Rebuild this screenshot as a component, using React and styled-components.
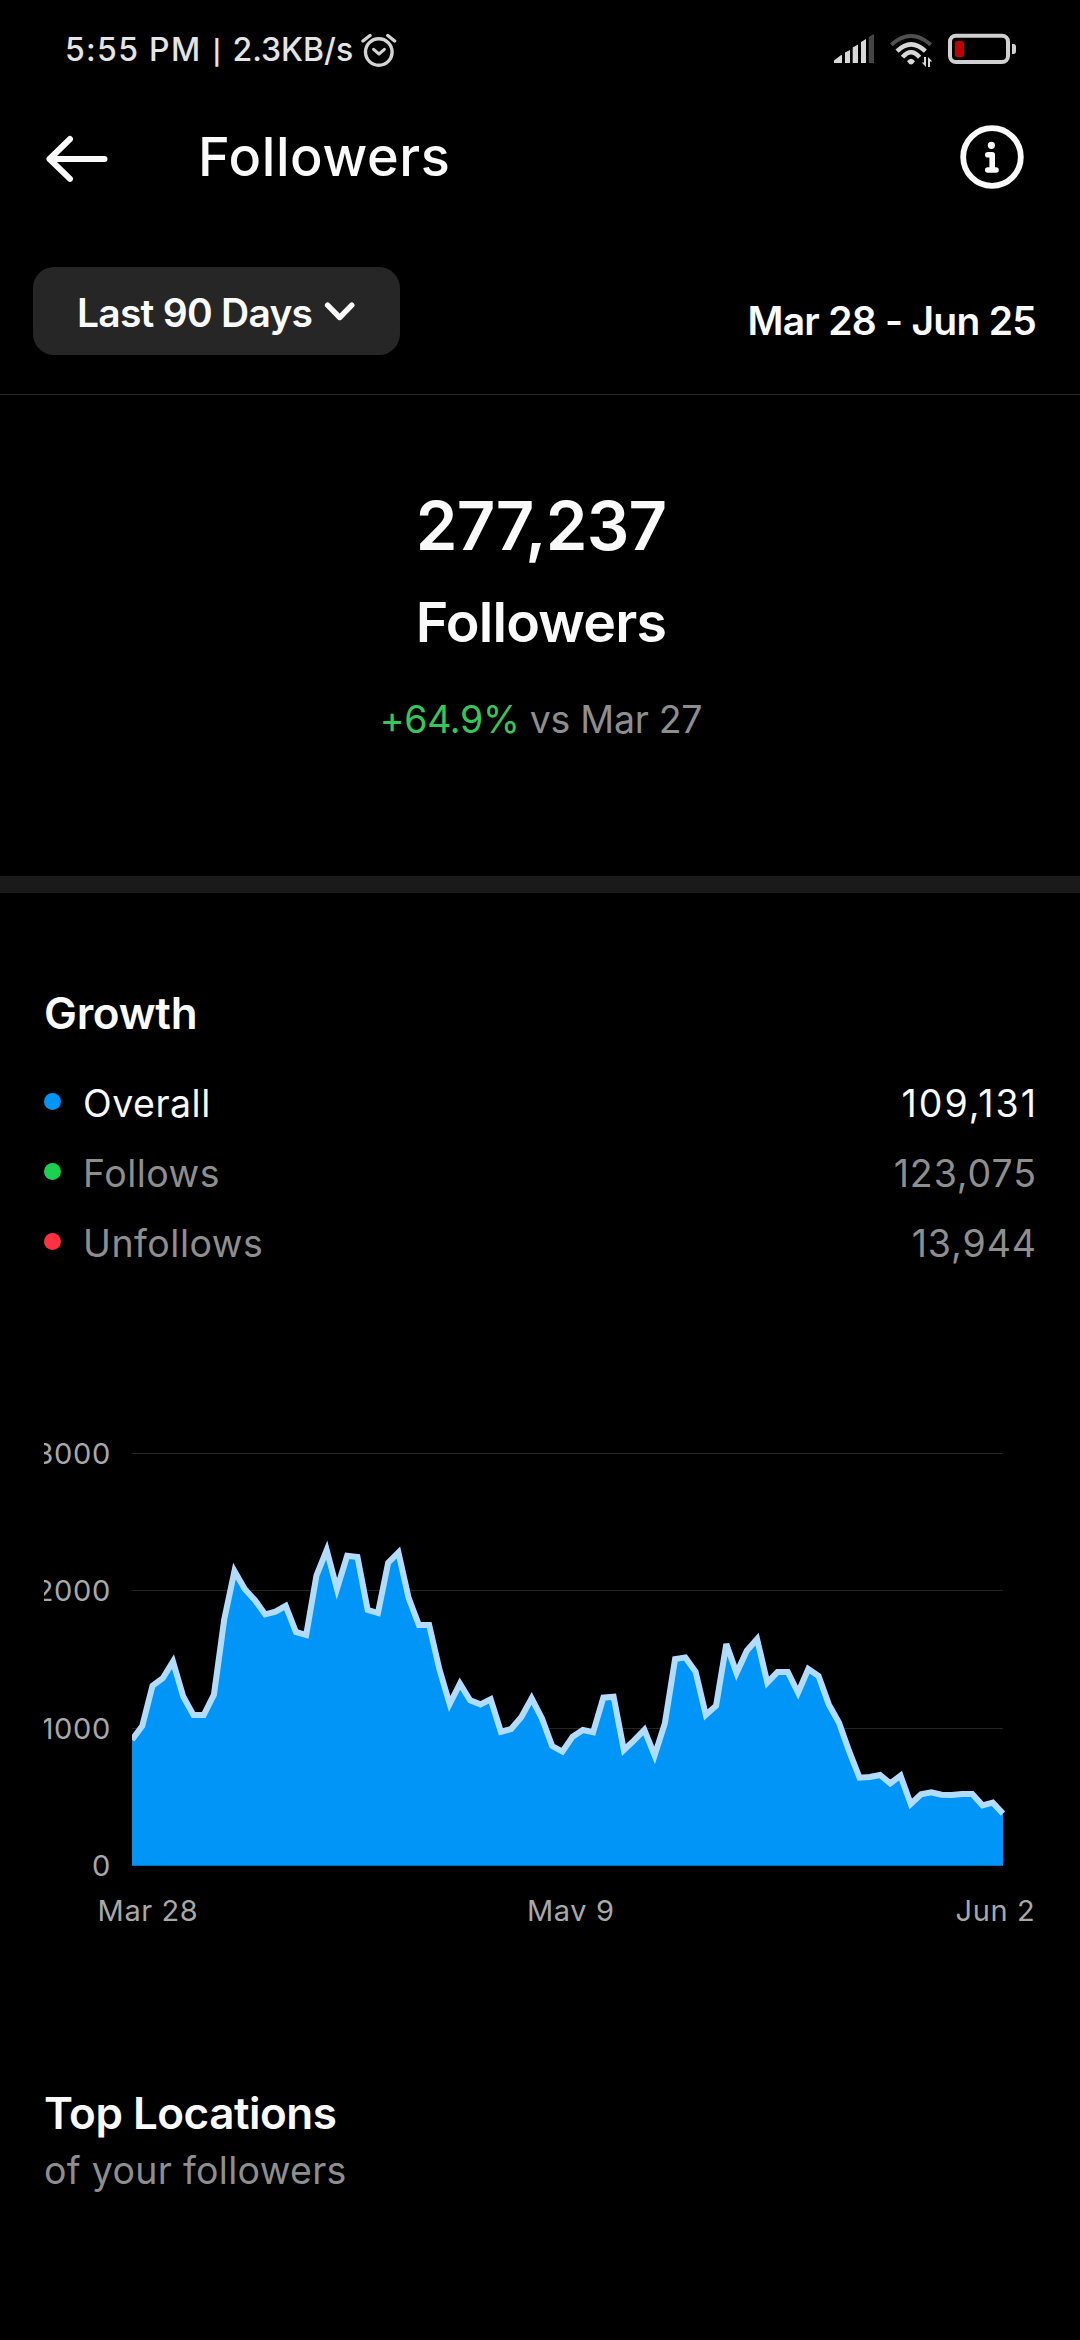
import React from "react";
import styled, { createGlobalStyle } from "styled-components";

const GlobalStyle = createGlobalStyle`
  * { box-sizing: border-box; }
  html, body { margin: 0; background: #000; }
  body { font-family: Inter, Roboto, "Liberation Sans", sans-serif; color: #fafafa; }
`;

const Screen = styled.main`
  width: 1080px;
  height: 2340px;
  background: #000;
  overflow: hidden;
  display: flex;
  flex-direction: column;
`;

const Text = styled.span`
  font-size: ${(p) => p.$size}px;
  line-height: ${(p) => p.$line}px;
  font-weight: ${(p) => p.$weight || 400};
  letter-spacing: ${(p) => p.$track || 0}px;
  color: ${(p) => p.$color || "#fafafa"};
  white-space: pre;
`;

const StatusBar = styled.div`
  height: 102px;
  flex: none;
  display: flex;
  justify-content: space-between;
  align-items: center;
  padding: 0 64px 0 65px;
`;

const StatusGroup = styled.div`
  display: flex;
  align-items: center;
  gap: ${(p) => p.$gap}px;
`;

const StatusLine = styled.div`
  display: flex;
  align-items: baseline;
`;

const StatusText = styled.span`
  font-size: 32px;
  line-height: 40px;
  font-weight: 500;
  letter-spacing: ${(p) => p.$track}px;
  color: #e4e4e4;
  white-space: pre;
`;

const StatusSeparator = styled.span`
  width: 31px;
  text-align: center;
  font-size: 24px;
  line-height: 40px;
  font-weight: 600;
  color: #e4e4e4;
`;

const Header = styled.header`
  height: 112px;
  flex: none;
  display: flex;
  align-items: center;
  padding: 0 56px 0 46px;
`;

const HeaderTitle = styled.h1`
  margin: 0 auto 0 88px;
  padding-bottom: 3px;
  font-size: 54px;
  line-height: 64px;
  font-weight: 500;
  letter-spacing: 0.6px;
  color: #fafafa;
`;

const IconButton = styled.button`
  display: flex;
  padding: 0;
  border: 0;
  background: none;
`;

const FilterBar = styled.section`
  height: 181px;
  flex: none;
  display: flex;
  justify-content: space-between;
  align-items: flex-start;
  padding: 53px 44px 0 33px;
  border-bottom: 1px solid #262626;
`;

const RangeButton = styled.button`
  width: 367px;
  height: 88px;
  display: flex;
  align-items: center;
  gap: 12px;
  padding: 4px 0 0 44px;
  border: 0;
  border-radius: 21px;
  background: #262626;
  font-family: inherit;

  svg {
    margin-bottom: 2px;
  }
`;

const DateRange = styled.div`
  padding-top: 24px;
  display: flex;
`;

const Summary = styled.section`
  height: 481px;
  flex: none;
  display: flex;
  flex-direction: column;
  align-items: center;
  padding: 90px 0 0 2px;
`;

const Divider = styled.div`
  height: 17px;
  flex: none;
  background: #1a1a1a;
`;

const Growth = styled.section`
  flex: none;
  height: 540px;
  padding: 90px 44px 0;
  display: flex;
  flex-direction: column;
`;

const SectionTitle = styled.h2`
  margin: 0;
  font-size: 44px;
  line-height: 60px;
  font-weight: 600;
  letter-spacing: ${(p) => p.$track || 0}px;
  color: #fafafa;
`;

const Legend = styled.ul`
  list-style: none;
  margin: 26px 0 0;
  padding: 0;
`;

const LegendRow = styled.li`
  height: 70px;
  display: flex;
  align-items: center;
  color: ${(p) => (p.$active ? "#fafafa" : "#8e8e8e")};
`;

const Dot = styled.i`
  width: 17px;
  height: 17px;
  border-radius: 50%;
  margin: 0 22px 5px 0;
  background: ${(p) => p.$color};
`;

const LegendName = styled.span`
  flex: 1;
  font-size: 37.5px;
  line-height: 60px;
  letter-spacing: 0.5px;
`;

const LegendValue = styled.span`
  font-size: 37.5px;
  line-height: 60px;
  letter-spacing: ${(p) => p.$track}px;
  margin-right: ${(p) => -p.$track}px;
`;

const ChartFrame = styled.div`
  flex: none;
  height: 488px;
  margin: 0 44px;
  overflow: hidden;
`;

const Chart = styled.svg`
  display: block;
  font-family: Inter, Roboto, "Liberation Sans", sans-serif;
  font-size: 29px;
`;

const Locations = styled.section`
  padding: 162px 44px 0;
  display: flex;
  flex-direction: column;
`;

const DAILY = [
  916, 1017, 1310, 1364, 1485, 1231, 1096, 1096, 1246, 1792, 2144, 2014, 1932,
  1829, 1849, 1891, 1701, 1679, 2112, 2297, 2014, 2255, 2247, 1861, 1839, 2205,
  2279, 1948, 1752, 1752, 1429, 1177, 1325, 1204, 1174, 1211, 975, 995, 1082,
  1218, 1073, 871, 830, 939, 988, 971, 1223, 1230, 842, 912, 988, 803, 1036,
  1504, 1516, 1412, 1097, 1165, 1614, 1402, 1565, 1650, 1332, 1410, 1410, 1259,
  1432, 1381, 1174, 1041, 830, 641, 646, 660, 599, 655, 449, 519, 534, 517, 515,
  522, 522, 439, 459, 379,
];

const LEGEND = [
  { name: "Overall", value: "109,131", color: "#0095f6", active: true, track: 2 },
  { name: "Follows", value: "123,075", color: "#1cd14f", track: 0.9 },
  { name: "Unfollows", value: "13,944", color: "#ff3040", track: 0.9 },
];

const PLOT = { left: 88, right: 959, base: 432.7, unit: 0.1374 };

function GrowthChart() {
  const step = (PLOT.right - PLOT.left) / (DAILY.length - 1);
  const points = DAILY.map(
    (v, i) => `${(PLOT.left + i * step).toFixed(2)},${(PLOT.base - v * PLOT.unit).toFixed(2)}`
  ).join(" ");
  return (
    <Chart width="992" height="488" viewBox="0 0 992 488">
      <clipPath id="plot">
        <rect x={PLOT.left} y="0" width="880" height="440" />
      </clipPath>
      {[3000, 2000, 1000].map((v) => (
        <rect
          key={v}
          x={PLOT.left}
          y={Math.round(PLOT.base - v * PLOT.unit - 0.5)}
          width={PLOT.right - PLOT.left}
          height="1"
          fill="#262626"
        />
      ))}
      <g clipPath="url(#plot)">
        <polygon
          fill="#0095f6"
          points={`${PLOT.left},${PLOT.base} ${points} ${PLOT.right},${PLOT.base}`}
        />
        <polyline fill="none" stroke="#b2dcff" strokeWidth="6" points={points} />
      </g>
      <g fill="#a8a8a8" letterSpacing="0.6">
        {[3000, 2000, 1000, 0].map((v) => (
          <text key={v} x="66.8" y={PLOT.base - v * PLOT.unit + 10.5} textAnchor="end">
            {v}
          </text>
        ))}
      </g>
      <g fill="#a8a8a8" letterSpacing="0.6">
        <text x="53.6" y="487.5">Mar 28</text>
        <text x="483" y="487.5">May 9</text>
        <text x="911.6" y="487.5">Jun 2</text>
      </g>
    </Chart>
  );
}

const AlarmIcon = () => (
  <svg width="36" height="36" viewBox="360 33 36 36" fill="none" stroke="#d4d4d4" strokeLinecap="round" strokeLinejoin="round">
    <circle cx="377.8" cy="52" r="13.3" strokeWidth="3.4" />
    <path d="M362 41L369 35.5M386.8 35.5L393.6 41" strokeWidth="3.4" />
    <path d="M372.6 49.3L378 54L383.4 49.3" strokeWidth="3" />
  </svg>
);

const SignalIcon = () => (
  <svg width="40" height="34" viewBox="834 34 40 34" fill="#d8d8d8">
    <path d="M834 63V60.5L840.5 55.5L842 55V63ZM845 63V52.5L850 50V63ZM852.7 63V47.5L858 44.5V63ZM861 63V42L866 39V63Z" />
    <path d="M868.8 63V36.8L874 34V63Z" fill="#454545" />
  </svg>
);

const WifiIcon = () => (
  <svg width="44" height="36" viewBox="889 33 44 36" fill="none" strokeLinecap="butt">
    <path d="M891.3 44.8Q911 27.2 930.7 44.8" stroke="#505050" strokeWidth="4" />
    <path d="M897 51.2Q911 37.6 925.4 51.2" stroke="#d8d8d8" strokeWidth="4.4" />
    <path d="M902.5 57.2Q911 47.2 919.6 57.2" stroke="#d8d8d8" strokeWidth="4.4" />
    <path d="M907 61.3Q911 56.2 915 61.3Q911 67.6 907 61.3Z" fill="#d8d8d8" />
    <path d="M924 57H926V67L921.7 62.5H924ZM928 67V57L932.4 61.5H930V67Z" fill="#d8d8d8" />
  </svg>
);

const BatteryIcon = () => (
  <svg width="68" height="36" viewBox="948 33 68 36">
    <rect x="950" y="35.7" width="58" height="26.4" rx="6" fill="none" stroke="#d0d0d0" strokeWidth="4" />
    <rect x="954.8" y="41" width="9.2" height="16" rx="2.5" fill="#c00000" />
    <path d="M1012 44H1013.5Q1016 44 1016 47V51Q1016 54 1013.5 54H1012Z" fill="#d0d0d0" />
  </svg>
);

const BackIcon = () => (
  <svg width="64" height="50" viewBox="46 133 64 50" fill="none" stroke="#fafafa" strokeWidth="6" strokeLinecap="round" strokeLinejoin="round">
    <path d="M104.5 159H49.5M70 139L49.5 159L70 178.8" />
  </svg>
);

const InfoIcon = () => (
  <svg width="64" height="66" viewBox="960 125 64 66" fill="none" stroke="#fafafa">
    <circle cx="992" cy="157" r="28.8" strokeWidth="5.8" />
    <circle cx="991.4" cy="145.3" r="3.6" fill="#fafafa" stroke="none" />
    <path d="M987.8 154.8H992.2V170M987.8 170H996" strokeWidth="5.6" strokeLinecap="round" strokeLinejoin="round" />
  </svg>
);

const ChevronIcon = () => (
  <svg width="32" height="24" viewBox="324 300 32 24" fill="none" stroke="#fafafa" strokeWidth="5.4" strokeLinecap="round" strokeLinejoin="round">
    <path d="M327.6 305.2L339.7 317.5L351.8 305.2" />
  </svg>
);

export default function App() {
  return (
    <Screen>
      <GlobalStyle />
      <StatusBar>
        <StatusGroup $gap={8}>
          <StatusLine>
            <StatusText $track={1.3}>5:55 PM</StatusText>
            <StatusSeparator>|</StatusSeparator>
            <StatusText $track={0}>2.3KB/s</StatusText>
          </StatusLine>
          <AlarmIcon />
        </StatusGroup>
        <StatusGroup $gap={15}>
          <SignalIcon />
          <WifiIcon />
          <BatteryIcon />
        </StatusGroup>
      </StatusBar>
      <Header>
        <IconButton aria-label="Back"><BackIcon /></IconButton>
        <HeaderTitle>Followers</HeaderTitle>
        <IconButton aria-label="Info"><InfoIcon /></IconButton>
      </Header>
      <FilterBar>
        <RangeButton>
          <Text $size={39} $line={50} $weight={600} $track={-0.75}>Last 90 Days</Text>
          <ChevronIcon />
        </RangeButton>
        <DateRange>
          <Text $size={39} $line={60} $weight={600} $track={-0.75}>Mar 28 - Jun 25</Text>
        </DateRange>
      </FilterBar>
      <Summary>
        <Text $size={67} $line={82} $weight={600} $track={-0.8}>277,237</Text>
        <Text $size={55.5} $line={109} $weight={600} $track={-0.8}>Followers</Text>
        <Text $size={37.5} $line={87} $color="#8e8e8e" $track={-0.3}>
          <Text $size={37.5} $line={87} $color="#34c759" $track={-0.3}>+64.9%</Text> vs Mar 27
        </Text>
      </Summary>
      <Divider />
      <Growth>
        <SectionTitle $track={-0.3}>Growth</SectionTitle>
        <Legend>
          {LEGEND.map((row) => (
            <LegendRow key={row.name} $active={row.active}>
              <Dot $color={row.color} />
              <LegendName>{row.name}</LegendName>
              <LegendValue $track={row.track}>{row.value}</LegendValue>
            </LegendRow>
          ))}
        </Legend>
      </Growth>
      <ChartFrame>
        <GrowthChart />
      </ChartFrame>
      <Locations>
        <SectionTitle $track={-0.5}>Top Locations</SectionTitle>
        <Text $size={37.5} $line={56} $color="#8e8e8e" $track={0.3}>of your followers</Text>
      </Locations>
    </Screen>
  );
}
